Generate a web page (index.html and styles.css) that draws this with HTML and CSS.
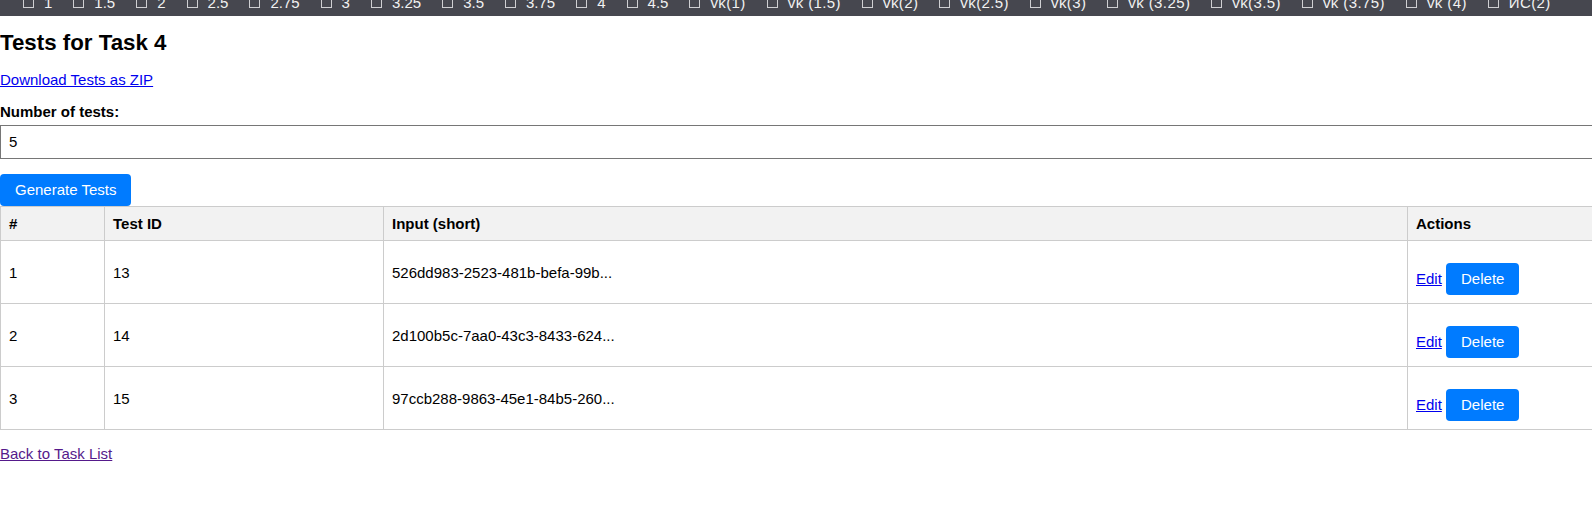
FILE: index.html
```html
<!DOCTYPE html>
<html lang="en">
<head>
<meta charset="utf-8">
<title>Tests for Task 4</title>
<link rel="stylesheet" href="styles.css">
</head>
<body>
<div class="topbar">
  <div class="topbar-row">
    <span class="opt"><span class="box"></span>1</span>
    <span class="opt"><span class="box"></span>1.5</span>
    <span class="opt"><span class="box"></span>2</span>
    <span class="opt"><span class="box"></span>2.5</span>
    <span class="opt"><span class="box"></span>2.75</span>
    <span class="opt"><span class="box"></span>3</span>
    <span class="opt"><span class="box"></span>3.25</span>
    <span class="opt"><span class="box"></span>3.5</span>
    <span class="opt"><span class="box"></span>3.75</span>
    <span class="opt"><span class="box"></span>4</span>
    <span class="opt"><span class="box"></span>4.5</span>
    <span class="opt opt-wide"><span class="box"></span>vk(1)</span>
    <span class="opt opt-wide"><span class="box"></span>vk (1.5)</span>
    <span class="opt opt-wide"><span class="box"></span>vk(2)</span>
    <span class="opt opt-wide"><span class="box"></span>vk(2.5)</span>
    <span class="opt opt-wide"><span class="box"></span>vk(3)</span>
    <span class="opt opt-wide"><span class="box"></span>vk (3.25)</span>
    <span class="opt opt-wide"><span class="box"></span>vk(3.5)</span>
    <span class="opt opt-wide"><span class="box"></span>vk (3.75)</span>
    <span class="opt opt-wide"><span class="box"></span>vk (4)</span>
    <span class="opt opt-wide"><span class="box"></span>ИС(2)</span>
  </div>
</div>
<main class="page">
  <h2 class="title">Tests for Task 4</h2>
  <p class="para"><a href="#" class="link">Download Tests as ZIP</a></p>
  <form class="gen-form">
    <label class="field-label" for="num">Number of tests:</label>
    <input id="num" class="field-input" type="text" value="5">
    <button type="button" class="btn btn-block">Generate Tests</button>
  </form>
  <table class="tests">
    <colgroup>
      <col class="c-num"><col class="c-id"><col class="c-input"><col class="c-actions">
    </colgroup>
    <thead>
      <tr><th>#</th><th>Test ID</th><th>Input (short)</th><th>Actions</th></tr>
    </thead>
    <tbody>
      <tr>
        <td>1</td><td>13</td><td>526dd983-2523-481b-befa-99b...</td>
        <td class="actions"><a href="#" class="link">Edit</a> <button type="button" class="btn">Delete</button></td>
      </tr>
      <tr>
        <td>2</td><td>14</td><td>2d100b5c-7aa0-43c3-8433-624...</td>
        <td class="actions"><a href="#" class="link">Edit</a> <button type="button" class="btn">Delete</button></td>
      </tr>
      <tr>
        <td>3</td><td>15</td><td>97ccb288-9863-45e1-84b5-260...</td>
        <td class="actions"><a href="#" class="link">Edit</a> <button type="button" class="btn">Delete</button></td>
      </tr>
    </tbody>
  </table>
  <p class="para"><a href="#" class="link link-visited">Back to Task List</a></p>
</main>
</body>
</html>
```

FILE: styles.css
```css
html, body {
  margin: 0;
  padding: 0;
  overflow: hidden;
  background: #fff;
}

body {
  font-family: "Liberation Sans", Arial, sans-serif;
  font-size: 15px;
  color: #000;
}

.topbar {
  height: 16px;
  background: #46474f;
  overflow: hidden;
}

.topbar-row {
  display: flex;
  align-items: baseline;
  gap: 21px;
  padding-left: 23px;
  margin-top: -7px;
  line-height: 18px;
  font-size: 15px;
  color: #f2f2f2;
  white-space: nowrap;
}

.opt {
  display: inline-flex;
  align-items: baseline;
}

.opt-wide {
  letter-spacing: 0.4px;
}

.box {
  display: inline-block;
  width: 9px;
  height: 13px;
  border: 1px solid #cfcfd2;
  margin-right: 10px;
}

.page {
  width: 1620px;
}

.title {
  font-size: 22.3px;
  font-weight: bold;
  margin: 14px 0 15px;
}

.para {
  margin: 15px 0;
}

.link {
  color: #0000ee;
  text-decoration: underline;
}

.link-visited {
  color: #551a8b;
}

.gen-form {
  margin: 0;
}

.field-label {
  display: block;
  font-weight: bold;
  margin-bottom: 5px;
}

.field-input {
  display: block;
  width: 100%;
  box-sizing: content-box;
  margin: 0;
  padding: 8px;
  font-family: "Liberation Sans", Arial, sans-serif;
  font-size: 15px;
  line-height: 16px;
  border: 1px solid #767676;
  border-radius: 0;
  color: #000;
  background: #fff;
}

.btn {
  font-family: "Liberation Sans", Arial, sans-serif;
  font-size: 15px;
  line-height: 18px;
  padding: 7px 15px;
  border: 0;
  border-radius: 4px;
  background: #007bff;
  color: #fff;
  cursor: pointer;
}

.btn-block {
  display: block;
  margin-top: 15px;
}

.tests {
  width: 100%;
  border-collapse: collapse;
  table-layout: fixed;
}

.c-num { width: 104px; }
.c-id { width: 279px; }
.c-input { width: 1024px; }

.tests th,
.tests td {
  border: 1px solid #cccccc;
  padding: 8px;
  text-align: left;
  vertical-align: middle;
  line-height: 17px;
}

.tests th {
  background: #f2f2f2;
  font-weight: bold;
}

.tests td {
  height: 46px;
}

.tests td.actions {
  padding-top: 22px;
  height: auto;
}
```
